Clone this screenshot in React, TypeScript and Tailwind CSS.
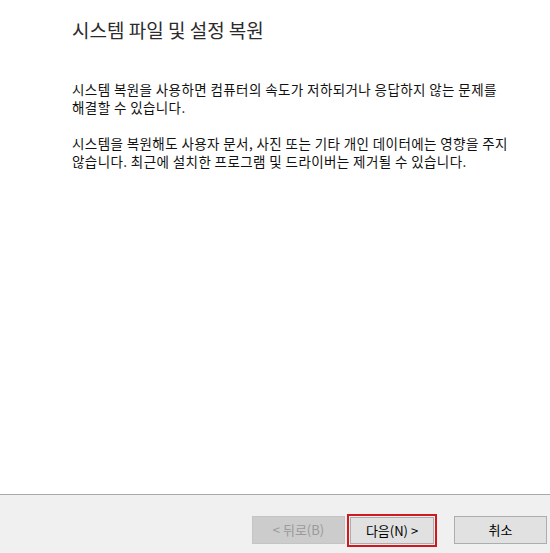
import React from 'react'

export default function App() {
  const font = { fontFamily: '"Noto Sans CJK KR", "Noto Sans", sans-serif' }
  return (
    <div
      className="w-[550px] h-[553px] flex flex-col bg-white overflow-hidden"
      style={font}
    >
      {/* Content */}
      <div className="flex-1 pl-[72px] pt-[17px]">
        <h1 className="text-[19px] leading-[26px] text-[#2b2b2b] font-normal whitespace-nowrap">
          시스템 파일 및 설정 복원
        </h1>
        <div className="mt-[37px] text-[13.5px] leading-[18px] tracking-[0.4px] text-[#111] whitespace-nowrap">
          <p>
            시스템 복원을 사용하면 컴퓨터의 속도가 저하되거나 응답하지 않는 문제를
            <br />
            해결할 수 있습니다.
          </p>
          <p className="mt-[18px]">
            시스템을 복원해도 사용자 문서, 사진 또는 기타 개인 데이터에는 영향을 주지
            <br />
            않습니다. 최근에 설치한 프로그램 및 드라이버는 제거될 수 있습니다.
          </p>
        </div>
      </div>

      {/* Footer */}
      <div className="h-[59px] border-t border-[#a9a9a9] bg-[#f0f0f0] flex items-start justify-end pr-[3px] pt-[19px]">
        <button
          disabled
          className="mt-[2px] w-[93px] h-[28px] bg-[#cccccc] border border-[#c4c4c4] text-[13px] text-[#9a9a9a]"
        >
          &lt; 뒤로(B)
        </button>
        <div className="ml-[2px] w-[90px] h-[33px] border-2 border-[#d0181e] p-px">
          <button className="w-full h-full bg-[#e1e1e1] border border-[#adadad] text-[13px] text-black">
            다음(N) &gt;
          </button>
        </div>
        <button className="mt-[2px] ml-[17px] w-[93px] h-[28px] bg-[#e1e1e1] border border-[#adadad] text-[13px] text-black">
          취소
        </button>
      </div>
    </div>
  )
}
